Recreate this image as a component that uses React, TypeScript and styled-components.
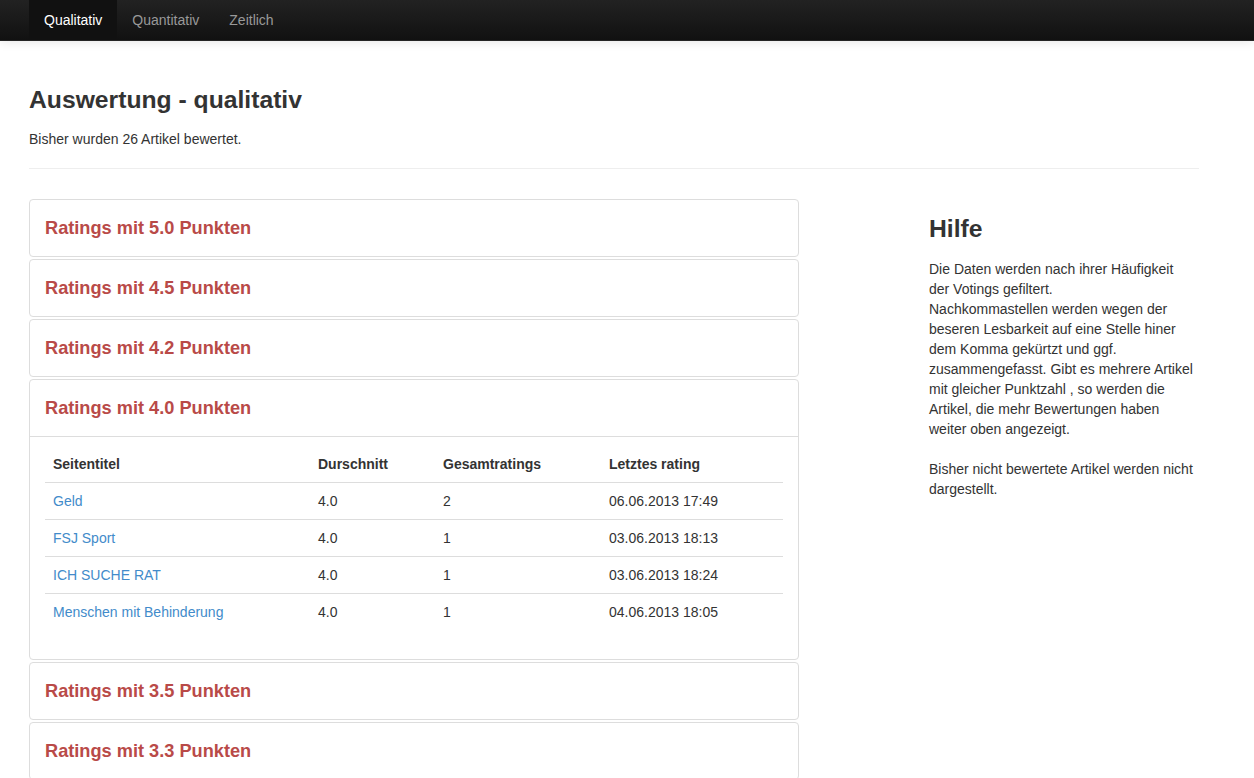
import React from "react";
import styled, { createGlobalStyle } from "styled-components";

const Global = createGlobalStyle`
  html, body { margin: 0; padding: 0; background: #fff; }
  body {
    font-family: "Liberation Sans", Arial, sans-serif;
    font-size: 14px;
    line-height: 20px;
    color: #333;
  }
  * { box-sizing: border-box; }
`;

const Navbar = styled.nav`
  height: 41px;
  background: linear-gradient(#222222, #111111);
  border-bottom: 1px solid #252525;
  box-shadow: 0 1px 10px rgba(0, 0, 0, 0.1);
  display: flex;
  padding-left: 29px;
`;

const NavItem = styled.a<{ $active?: boolean }>`
  display: flex;
  align-items: center;
  height: 40px;
  padding: 0 15px;
  font-size: 14px;
  color: ${(p) => (p.$active ? "#fff" : "#999")};
  background: ${(p) => (p.$active ? "#111" : "transparent")};
  text-decoration: none;
  cursor: pointer;
`;

const Container = styled.div`
  width: 1170px;
  margin-left: 29px;
  padding-top: 45px;
`;

const PageTitle = styled.h1`
  margin: 0;
  font-size: 24.7px;
  line-height: 28px;
  font-weight: bold;
  color: #333;
`;

const Lead = styled.p`
  margin: 15px 0 0;
`;

const Rule = styled.hr`
  margin: 19px 0 0;
  border: 0;
  border-top: 1px solid #eee;
`;

const Columns = styled.div`
  display: flex;
  gap: 130px;
  margin-top: 30px;
`;

const MainCol = styled.div`
  width: 770px;
  flex: none;
`;

const Side = styled.aside`
  width: 266px;
  flex: none;
  padding-top: 15px;
`;

const Panel = styled.section`
  border: 1px solid #ddd;
  border-radius: 4px;
  margin-bottom: 2px;
  background: #fff;
`;

const PanelHead = styled.div<{ $open?: boolean }>`
  padding: 18px 15px;
  border-bottom: ${(p) => (p.$open ? "1px solid #ddd" : "0")};
`;

const PanelTitle = styled.h3`
  margin: 0;
  font-size: 18.2px;
  line-height: 20px;
  font-weight: bold;
  color: #b94a48;
`;

const PanelBody = styled.div`
  padding: 9px 15px 29px;
`;

const Table = styled.table`
  width: 100%;
  border-collapse: collapse;
`;

const Th = styled.th<{ $w?: number }>`
  text-align: left;
  font-weight: bold;
  padding: 8px;
  line-height: 20px;
  border-bottom: 1px solid #ddd;
  width: ${(p) => (p.$w ? `${p.$w}px` : "auto")};
`;

const Td = styled.td`
  padding: 8px;
  line-height: 20px;
  border-bottom: 1px solid #ddd;
  tr:last-child > & { border-bottom: 0; }
`;

const Link = styled.a`
  color: #428bca;
  text-decoration: none;
  cursor: pointer;
`;

const SideTitle = styled.h2`
  margin: 0 0 15px;
  font-size: 24.7px;
  line-height: 30px;
  font-weight: bold;
  color: #333;
`;

const SideText = styled.p`
  margin: 0;
`;

const rows = [
  { t: "Geld", a: "4.0", n: "2", d: "06.06.2013 17:49" },
  { t: "FSJ Sport", a: "4.0", n: "1", d: "03.06.2013 18:13" },
  { t: "ICH SUCHE RAT", a: "4.0", n: "1", d: "03.06.2013 18:24" },
  { t: "Menschen mit Behinderung", a: "4.0", n: "1", d: "04.06.2013 18:05" },
];

const groups = ["5.0", "4.5", "4.2", "4.0", "3.5", "3.3"];

export default function App() {
  return (
    <>
      <Global />
      <Navbar>
        <NavItem $active>Qualitativ</NavItem>
        <NavItem>Quantitativ</NavItem>
        <NavItem>Zeitlich</NavItem>
      </Navbar>
      <Container>
        <PageTitle>Auswertung - qualitativ</PageTitle>
        <Lead>Bisher wurden 26 Artikel bewertet.</Lead>
        <Rule />
        <Columns>
          <MainCol>
            {groups.map((g) => {
              const open = g === "4.0";
              return (
                <Panel key={g}>
                  <PanelHead $open={open}>
                    <PanelTitle>Ratings mit {g} Punkten</PanelTitle>
                  </PanelHead>
                  {open && (
                    <PanelBody>
                      <Table>
                        <thead>
                          <tr>
                            <Th $w={265}>Seitentitel</Th>
                            <Th $w={125}>Durschnitt</Th>
                            <Th $w={166}>Gesamtratings</Th>
                            <Th>Letztes rating</Th>
                          </tr>
                        </thead>
                        <tbody>
                          {rows.map((r) => (
                            <tr key={r.t}>
                              <Td>
                                <Link>{r.t}</Link>
                              </Td>
                              <Td>{r.a}</Td>
                              <Td>{r.n}</Td>
                              <Td>{r.d}</Td>
                            </tr>
                          ))}
                        </tbody>
                      </Table>
                    </PanelBody>
                  )}
                </Panel>
              );
            })}
          </MainCol>
          <Side>
            <SideTitle>Hilfe</SideTitle>
            <SideText>
              Die Daten werden nach ihrer Häufigkeit der Votings gefiltert.
              <br />
              Nachkommastellen werden wegen der beseren Lesbarkeit auf eine
              Stelle hiner dem Komma gekürtzt und ggf. zusammengefasst. Gibt es
              mehrere Artikel mit gleicher Punktzahl , so werden die Artikel,
              die mehr Bewertungen haben weiter oben angezeigt.
              <br />
              <br />
              Bisher nicht bewertete Artikel werden nicht dargestellt.
            </SideText>
          </Side>
        </Columns>
      </Container>
    </>
  );
}
